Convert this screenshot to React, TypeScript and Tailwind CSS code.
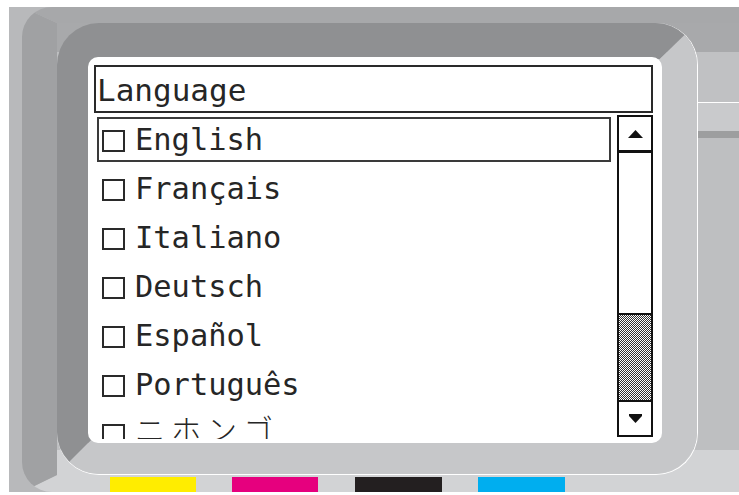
import clsx from "clsx";

const LANGS = ["English", "Français", "Italiano", "Deutsch", "Español", "Português"];

const mono = "font-['DejaVu_Sans_Mono','Liberation_Mono',monospace]";

function Checkbox() {
  return <span className="w-[23px] h-[22px] mt-[3px] border-2 border-[#2a2a2a] shrink-0" />;
}

function Row({ label, selected, jp }: { label: string; selected?: boolean; jp?: boolean }) {
  return (
    <div className="h-[49px] py-[2px] shrink-0">
      <div
        className={clsx(
          "h-full flex items-center pl-[3px] border-2",
          selected ? "border-[#3a3a3a]" : "border-transparent"
        )}
      >
        <Checkbox />
        <span
          className={clsx(
            "ml-[10px] leading-[41px] whitespace-nowrap text-[#262626]",
            jp
              ? "relative -top-[5px] font-['Noto_Sans_CJK_JP',sans-serif] text-[30px] tracking-[6px] font-light"
              : clsx(mono, "text-[30.4px]")
          )}
        >
          {label}
        </span>
      </div>
    </div>
  );
}

function Arrow({ up }: { up?: boolean }) {
  return up ? (
    <svg width="15" height="8" viewBox="0 0 15 8">
      <polygon points="7.5,0 15,8 0,8" fill="#111" />
    </svg>
  ) : (
    <svg width="13" height="9" viewBox="0 0 13 9">
      <polygon points="0,0 13,0 13,2 6.5,9 0,2" fill="#111" />
    </svg>
  );
}

function Scrollbar() {
  return (
    <div className="w-[36px] h-[322px] border-2 border-[#111] flex flex-col shrink-0 bg-white">
      <div className="h-[36px] border-b-[3px] border-[#111] flex items-center justify-center">
        <Arrow up />
      </div>
      <div className="h-[162px] border-b-2 border-[#111]" />
      <div className="flex-1 bg-[image:repeating-conic-gradient(#333333_0_25%,#ffffff_0_50%)] bg-[length:2px_2px]" />
      <div className="h-[35px] border-t-2 border-[#111] flex items-center justify-center">
        <Arrow />
      </div>
    </div>
  );
}

function Screen() {
  return (
    <div className="w-[574px] h-[386px] bg-white rounded-[10px] pl-[6px] pr-[9px] pt-[8px] flex flex-col">
      <div className="h-[48px] border-2 border-[#2a2a2a] pl-[1px] pt-[2px] shrink-0">
        <span className={clsx(mono, "text-[31px] leading-[42px] text-[#262626]")}>Language</span>
      </div>
      <div className="mt-[2px] h-[324px] flex pl-[3px] overflow-hidden">
        <div className="w-[514px] flex flex-col overflow-hidden">
          {LANGS.map((l, i) => (
            <Row key={l} label={l} selected={i === 0} />
          ))}
          <Row label="ニホンゴ" jp />
        </div>
        <div className="ml-[6px]">
          <Scrollbar />
        </div>
      </div>
    </div>
  );
}

export default function App() {
  return (
    <div className="w-[739px] h-[495px] bg-white overflow-hidden pt-[7px] pl-[9px]">
      <div className="relative w-[730px] h-[485px] bg-[#b8b9bb] flex">
        <div className="ml-[13px] flex-1 flex rounded-tl-[30px] rounded-bl-[30px] border-l-[35px] border-t-[16px] border-b-[17px] border-l-[#a0a1a3] border-t-[#a7a8aa] border-b-[#d2d3d5] bg-[image:linear-gradient(#a8a9ab_0_29px,#bebfc1_29px_calc(100%_-_25px),#d2d3d5_calc(100%_-_25px))]">
          <div className="w-[641px] h-[452px] rounded-[42px] border-r border-b border-white shrink-0">
            <div className="w-[640px] h-[451px] rounded-[42px] border-l-[31px] border-t-[34px] border-r-[35px] border-b-[31px] border-l-[#8f9092] border-t-[#8f9092] border-r-[#c6c7c9] border-b-[#c6c7c9] bg-[image:linear-gradient(to_bottom_right,#8f9092_50%,#c6c7c9_50%)]">
              <Screen />
            </div>
          </div>
          <div className="flex-1 flex flex-col">
            <div className="h-[29px]" />
            <div className="h-[50px] bg-[#c0c1c3]" />
            <div className="h-px bg-white" />
            <div className="h-[28px] bg-[#c9cacc]" />
            <div className="h-[7px] bg-[#9d9e9f]" />
          </div>
        </div>
        <div className="absolute left-[101px] bottom-0 flex h-[15px]">
          <div className="w-[86px] bg-[#ffed00]" />
          <div className="w-[86px] ml-[36px] bg-[#e6007e]" />
          <div className="w-[87px] ml-[37px] bg-[#231f20]" />
          <div className="w-[87px] ml-[36px] bg-[#00aeef]" />
        </div>
      </div>
    </div>
  );
}
